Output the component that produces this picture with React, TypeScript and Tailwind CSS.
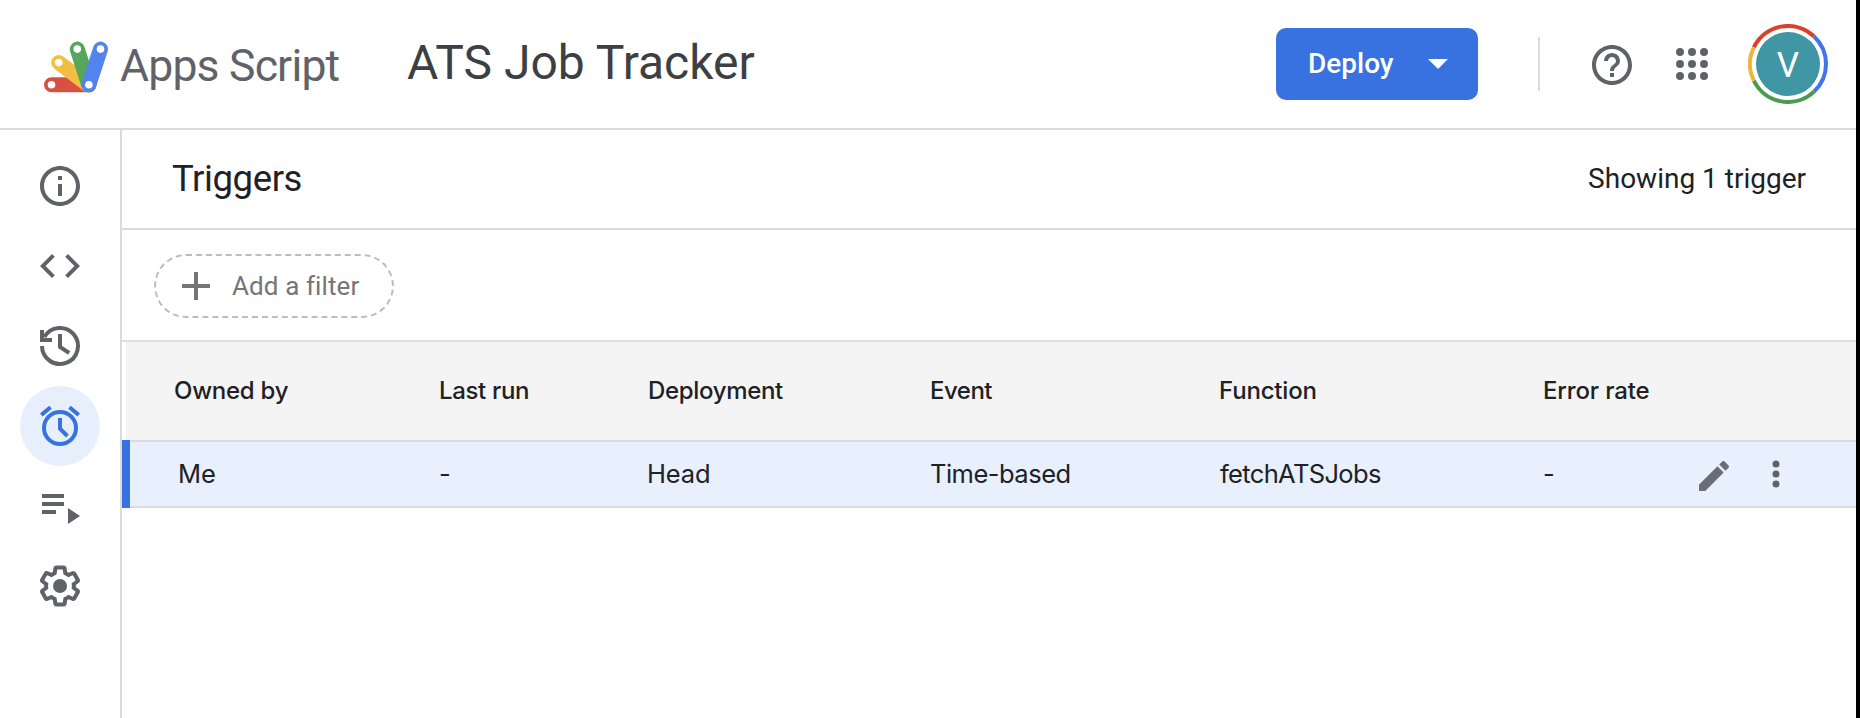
import type { ReactNode } from "react";

function Icon({ children, className = "size-12" }: { children: ReactNode; className?: string }) {
  return (
    <svg viewBox="0 0 24 24" fill="currentColor" className={`shrink-0 ${className}`} aria-hidden="true">
      {children}
    </svg>
  );
}

function Logo() {
  return (
    <svg viewBox="0 0 66 54" className="h-[54px] w-[66px] shrink-0" fill="none" strokeWidth="15" strokeLinecap="round" aria-hidden="true">
      <path d="M8.5 45.8H46" stroke="#d85140" />
      <path d="M15.7 23.6L45 45.8" stroke="#f1bf42" />
      <path d="M34.3 10.1L45.7 45.8" stroke="#58a55c" />
      <path d="M57.5 10.1L45.9 45.8" stroke="#5383ec" />
      <g fill="#fff">
        <circle cx="8.5" cy="45.8" r="3.8" />
        <circle cx="15.7" cy="23.6" r="3.8" />
        <circle cx="34.3" cy="10.1" r="3.8" />
        <circle cx="57.5" cy="10.1" r="3.8" />
        <circle cx="45.9" cy="45.8" r="3.8" />
      </g>
    </svg>
  );
}

function Avatar() {
  return (
    <div className="grid size-20 place-items-center">
      <svg viewBox="0 0 80 80" className="col-start-1 row-start-1 size-20" fill="none" strokeWidth="4" aria-hidden="true">
        <path d="M5.85 23.3A38 38 0 0 1 65.9 12.2" stroke="#d9412d" />
        <path d="M65.9 12.2A38 38 0 0 1 65.9 67.8" stroke="#4274eb" />
        <path d="M65.9 67.8A38 38 0 0 1 5.85 56.7" stroke="#4a9c4c" />
        <path d="M5.85 56.7A38 38 0 0 1 5.85 23.3" stroke="#eeb43b" />
      </svg>
      <div className="col-start-1 row-start-1 flex size-16 items-center justify-center rounded-full bg-[#4196a6] pt-0.5 font-['Roboto',sans-serif] text-[35px] leading-none text-white">
        V
      </div>
    </div>
  );
}

function Header() {
  return (
    <header className="flex h-[130px] shrink-0 items-center border-b-2 border-[#dadae0] pl-[43px] pr-7">
      <div className="flex w-[364px] items-center pt-1">
        <Logo />
        <span className="ml-[11px] font-['Roboto',sans-serif] text-[44.5px] leading-[54px] tracking-[-0.8px] text-[#5f6368]">Apps Script</span>
      </div>
      <h1 className="pb-[3px] font-['Roboto',sans-serif] text-[48px] leading-[56px] text-[#3c4043]">ATS Job Tracker</h1>
      <div className="ml-auto flex items-center">
        <button className="flex h-[72px] w-[202px] items-center rounded-[10px] bg-[#3871e0] pl-8 font-['Roboto',sans-serif] text-[28px] font-medium text-white">
          Deploy
          <svg viewBox="0 0 20 10" className="ml-[34px] h-2.5 w-5" fill="currentColor" aria-hidden="true">
            <path d="M0 0h20L10 10z" />
          </svg>
        </button>
        <div className="ml-[60px] h-[54px] w-0.5 bg-[#dadae0]" />
        <div className="ml-12 flex items-center gap-8 text-[#5f6368]">
          <div className="pt-0.5">
            <Icon>
              <path d="M11 18h2v-2h-2v2zm1-16C6.48 2 2 6.48 2 12s4.48 10 10 10 10-4.48 10-10S17.52 2 12 2zm0 18c-4.41 0-8-3.59-8-8s3.59-8 8-8 8 3.59 8 8-3.59 8-8 8zm0-14c-2.21 0-4 1.79-4 4h2c0-1.1.9-2 2-2s2 .9 2 2c0 2-3 1.75-3 5h2c0-2.25 3-2.5 3-5 0-2.21-1.79-4-4-4z" />
            </Icon>
          </div>
          <Icon>
            {[6, 12, 18].map((y) => [6, 12, 18].map((x) => <circle key={`${x}-${y}`} cx={x} cy={y} r="2" />))}
          </Icon>
          <Avatar />
        </div>
      </div>
    </header>
  );
}

function NavItem({ active = false, children }: { active?: boolean; children: ReactNode }) {
  return (
    <a className={`flex size-20 items-center justify-center rounded-full ${active ? "bg-[#e7effd] text-[#3871e0]" : "text-[#5f6368]"}`}>
      <Icon>{children}</Icon>
    </a>
  );
}

function Sidebar() {
  return (
    <nav className="flex w-[122px] shrink-0 flex-col border-r-2 border-[#dadae0] pl-5 pt-4">
      <NavItem>
        <path d="M11 7h2v2h-2zm0 4h2v6h-2zm1-9C6.48 2 2 6.48 2 12s4.48 10 10 10 10-4.48 10-10S17.52 2 12 2zm0 18c-4.41 0-8-3.59-8-8s3.59-8 8-8 8 3.59 8 8-3.59 8-8 8z" />
      </NavItem>
      <NavItem>
        <path d="M9.4 16.6L4.8 12l4.6-4.6L8 6l-6 6 6 6 1.4-1.4zm5.2 0l4.6-4.6-4.6-4.6L16 6l6 6-6 6-1.4-1.4z" />
      </NavItem>
      <NavItem>
        <g fill="none" stroke="currentColor" strokeWidth="2">
          <path d="M3 12a9 9 0 1 0 1.200-4.500" />
          <path d="M3 4v5h5" />
          <path d="M12 6v6.500l4.600 3" />
        </g>
      </NavItem>
      <NavItem active>
        <g fill="none" stroke="currentColor" strokeWidth="2">
          <circle cx="12" cy="13" r="8" />
          <path d="M2.650 6.480L7.240 2.620M21.350 6.480L16.760 2.620" />
          <path d="M12 8v5.300l3.700 3.700" />
        </g>
      </NavItem>
      <NavItem>
        <path d="M3 6h11v2H3zM3 10h11v2H3zM3 14h7v2H3zM16 13v8l6-4z" />
      </NavItem>
      <NavItem>
        <path d="M13.85 22.25h-3.7c-.74 0-1.36-.54-1.45-1.27l-.27-1.89c-.27-.14-.53-.29-.79-.46l-1.8.72c-.7.26-1.47-.03-1.81-.65L2.2 15.53c-.35-.66-.2-1.44.36-1.88l1.53-1.19c-.01-.15-.02-.3-.02-.46 0-.15.01-.31.02-.46l-1.52-1.19c-.59-.45-.74-1.26-.37-1.88l1.85-3.19c.34-.62 1.11-.9 1.79-.63l1.81.73c.26-.17.52-.32.78-.46l.27-1.91c.09-.7.71-1.25 1.44-1.25h3.7c.74 0 1.36.54 1.45 1.27l.27 1.89c.27.14.53.29.79.46l1.8-.72c.71-.26 1.48.03 1.82.65l1.84 3.18c.36.66.2 1.44-.36 1.88l-1.52 1.19c.01.15.02.3.02.46s-.01.31-.02.46l1.52 1.19c.56.45.72 1.23.37 1.86l-1.86 3.22c-.34.62-1.11.9-1.8.63l-1.8-.72c-.26.17-.52.32-.78.46l-.27 1.91c-.1.68-.72 1.22-1.46 1.22zm-3.23-2h2.76l.37-2.55.53-.22c.44-.18.88-.44 1.34-.78l.45-.34 2.38.96 1.38-2.4-2.03-1.58.07-.56c.03-.26.06-.51.06-.78s-.03-.53-.06-.78l-.07-.56 2.03-1.58-1.39-2.4-2.39.96-.45-.35c-.42-.32-.87-.58-1.33-.77l-.52-.22-.37-2.55h-2.76l-.37 2.55-.53.21c-.44.19-.88.44-1.34.79l-.45.33-2.38-.95-1.39 2.39 2.03 1.58-.07.56a7 7 0 0 0-.06.79c0 .26.02.53.06.78l.07.56-2.03 1.58 1.38 2.4 2.39-.96.45.35c.43.33.86.58 1.33.77l.53.22.38 2.55z" />
        <circle cx="12" cy="12" r="3.5" />
      </NavItem>
    </nav>
  );
}

const columns = "grid grid-cols-[265px_208px_283px_289px_324px_1fr] items-center";

function TriggerTable() {
  return (
    <section className="font-['Inter',sans-serif] text-[#202124]">
      <div className={`${columns} ml-1 h-[98px] bg-[#f4f4f4] pl-12 text-[24px] font-medium`}>
        <span className="tracking-[-0.25px]">Owned by</span>
        <span className="tracking-[-0.34px]">Last run</span>
        <span className="pl-px tracking-[-0.33px]">Deployment</span>
        <span className="tracking-[-0.5px]">Event</span>
        <span className="tracking-[-0.18px]">Function</span>
        <span className="tracking-[-0.14px]">Error rate</span>
      </div>
      <div className="flex h-[68px] border-l-8 border-[#3871e0]">
        <div className={`${columns} flex-1 border-y-2 border-[#dadae0] bg-[#e8effd] pl-11 text-[25.5px]`}>
          <span className="pl-1">Me</span>
          <span>-</span>
          <span className="tracking-[-0.13px]">Head</span>
          <span className="tracking-[-0.51px]">Time-based</span>
          <span className="pl-px tracking-[-0.64px]">fetchATSJobs</span>
          <div className="flex items-center justify-between pr-[60px]">
            <span>-</span>
            <div className="flex items-center gap-[22px]">
              <div className="pt-1 text-[#6b6d76]">
                <Icon className="size-10">
                  <path d="M3 17.25V21h3.75L17.81 9.94l-3.75-3.75L3 17.25zM20.71 7.04c.39-.39.39-1.02 0-1.41l-2.34-2.34c-.39-.39-1.02-.39-1.41 0l-1.83 1.83 3.75 3.75 1.83-1.83z" />
                </Icon>
              </div>
              <Icon className="size-10 text-[#5f6368]">
                <circle cx="12" cy="6" r="2.100" />
                <circle cx="12" cy="12" r="2.100" />
                <circle cx="12" cy="18" r="2.100" />
              </Icon>
            </div>
          </div>
        </div>
      </div>
    </section>
  );
}

export default function App() {
  return (
    <div className="flex h-[718px] w-[1860px] flex-col overflow-hidden border-r-4 border-black bg-white">
      <Header />
      <div className="flex min-h-0 flex-1">
        <Sidebar />
        <main className="flex-1">
          <div className="flex h-[100px] items-center justify-between border-b-2 border-[#dadae0] pl-[50px] pr-[50px] text-[#202124]">
            <h2 className="font-['Roboto',sans-serif] text-[36.5px] tracking-[-0.4px]">Triggers</h2>
            <span className="font-['Roboto',sans-serif] text-[28px]">Showing 1 trigger</span>
          </div>
          <div className="flex h-28 items-center border-b-2 border-[#e0e0e0] pl-8 pt-0.5">
            <button className="flex h-16 w-60 items-center rounded-full border-2 border-dashed border-[#bdbdbd] pl-[26px] font-['Roboto',sans-serif] text-[26px] tracking-[0.1px] text-[#757575]">
              <svg viewBox="0 0 28 28" className="mr-[22px] size-7" fill="currentColor" aria-hidden="true">
                <path d="M12 0h4v12h12v4H16v12h-4V16H0v-4h12z" />
              </svg>
              Add a filter
            </button>
          </div>
          <TriggerTable />
        </main>
      </div>
    </div>
  );
}
